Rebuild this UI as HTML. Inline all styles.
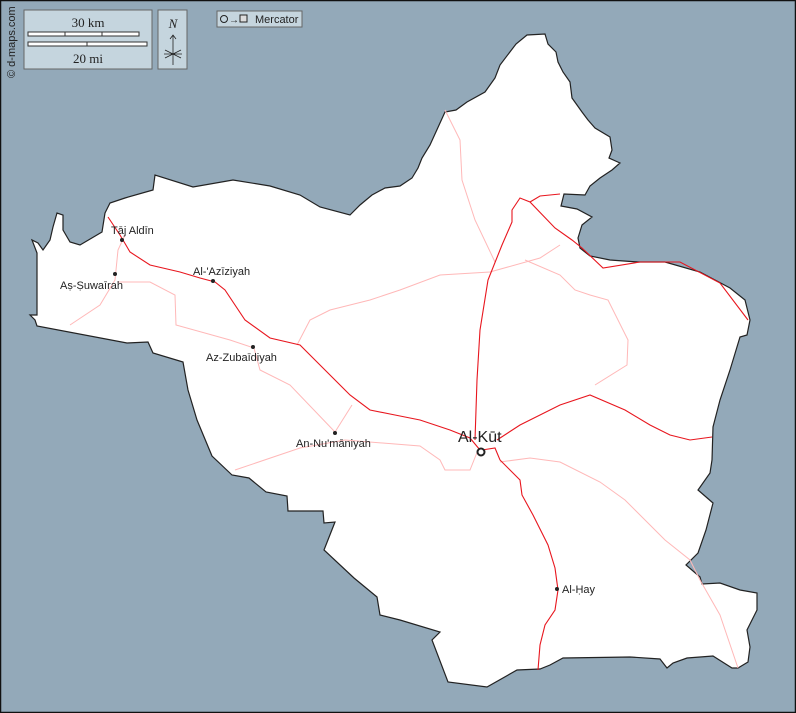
<!DOCTYPE html>
<html><head><meta charset="utf-8"><style>
html,body{margin:0;padding:0}
body{width:796px;height:713px;overflow:hidden;background:#93a9b9;position:relative;font-family:"Liberation Sans",sans-serif}
svg{position:absolute;left:0;top:0}
</style></head><body>
<svg width="796" height="713" viewBox="0 0 796 713">
<rect x="0.5" y="0.5" width="795" height="712" fill="#93a9b9" stroke="#111" stroke-width="1.5"/>
<path fill="#fff" stroke="#222" stroke-width="1.2" d="M30,315 L37,315 L37,253 L32,240 L38,243 L43,250 L50,240 L53,227 L57,213 L63,215 L63,230 L70,242 L80,245 L102,232 L105,213 L110,203 L125,198 L153,190 L155,175 L193,187 L233,180 L270,186 L300,195 L320,207 L350,215 L360,205 L372,195 L385,188 L400,186 L412,178 L418,168 L422,158 L430,145 L445,112 L456,110 L467,102 L485,92 L495,78 L500,65 L516,44 L527,35 L545,34 L548,44 L556,52 L558,62 L563,72 L570,82 L572,98 L582,112 L588,120 L595,128 L610,137 L612,150 L609,158 L620,163 L612,170 L600,178 L590,186 L585,195 L564,194 L561,206 L577,209 L592,217 L582,225 L578,238 L580,248 L590,256 L610,260 L638,262 L665,262 L700,272 L715,280 L730,288 L745,300 L750,320 L747,335 L740,337 L730,370 L720,400 L713,427 L712,460 L710,473 L698,490 L713,503 L706,530 L698,553 L686,565 L700,577 L702,584 L720,583 L740,590 L757,593 L757,610 L747,630 L750,647 L748,662 L738,668 L732,668 L713,656 L687,658 L673,663 L667,668 L660,659 L630,657 L563,658 L550,665 L540,669 L517,670 L487,687 L448,682 L432,640 L440,632 L400,620 L380,615 L377,597 L354,578 L324,550 L335,522 L324,523 L323,511 L288,511 L287,496 L266,492 L249,478 L232,475 L212,456 L197,420 L188,390 L183,362 L153,353 L148,342 L127,343 L37,326 L35,320 Z"/>
<g fill="none" stroke="#ffb8b8" stroke-width="1">
<path d="M70,325 L100,305 L115,280 L118,250 L125,235"/>
<path d="M118,282 L150,282 L175,295 L176,325 L230,340 L254,348 L260,370 L290,385 L335,432"/>
<path d="M235,470 L300,448 L345,440 L420,446 L440,460 L445,470 L470,470 L478,450"/>
<path d="M335,432 L352,405"/>
<path d="M297,345 L310,320 L330,310 L370,300 L400,290 L440,275 L490,272 L540,258 L560,245"/>
<path d="M445,110 L460,140 L462,180 L475,220 L495,262"/>
<path d="M525,260 L560,275 L575,290 L590,295 L608,300 L628,340 L627,365 L595,385"/>
<path d="M500,462 L530,458 L560,462 L600,482 L625,500 L665,540 L690,560 L700,580 L720,615 L738,668"/>
</g>
<g fill="none" stroke="#e8161e" stroke-width="1.1">
<path d="M108,217 L120,235 L130,252 L150,265 L180,272 L200,278 L215,282 L225,290 L245,320 L270,338 L300,345 L315,360 L330,375 L350,395 L370,410 L395,415 L420,420 L450,430 L470,438 L480,450"/>
<path d="M475,440 L477,380 L480,330 L488,280 L502,245 L512,222 L512,210 L520,198 L530,202 L555,228 L572,240 L582,248 L603,268 L640,262 L680,262 L720,283 L748,320"/>
<path d="M530,202 L540,196 L560,194"/>
<path d="M497,440 L520,425 L560,405 L590,395 L625,410 L650,425 L670,435 L690,440 L712,437"/>
<path d="M482,450 L495,448 L500,460 L520,480 L522,495 L533,515 L548,545 L555,568 L558,590 L555,610 L545,625 L540,645 L538,670"/>
</g>
<g fill="#222">
<circle cx="122" cy="240" r="2"/><circle cx="115" cy="274" r="2"/><circle cx="213" cy="281" r="2"/>
<circle cx="253" cy="347" r="2"/><circle cx="335" cy="433" r="2"/><circle cx="557" cy="589" r="2"/>
</g>
<circle cx="481" cy="452" r="3.5" fill="#fff" stroke="#222" stroke-width="2"/>
<g font-size="11" fill="#222" font-family="Liberation Sans,sans-serif">
<text x="111" y="234">Tāj Aldīn</text>
<text x="60" y="289">Aṣ-Ṣuwaīrah</text>
<text x="193" y="275">Al-'Azīziyah</text>
<text x="206" y="361">Az-Zubaīdiyah</text>
<text x="296" y="447">An-Nu'māniyah</text>
<text x="562" y="593">Al-Ḥay</text>
<text x="458" y="442" font-size="16">Al-Kūt</text>
</g>
<rect x="24" y="10" width="128" height="59" fill="#c5d5de" stroke="#666"/>
<text x="88" y="27" font-family="Liberation Serif,serif" font-size="13" text-anchor="middle" fill="#222">30 km</text>
<rect x="28" y="32" width="111" height="4" fill="#fff" stroke="#333"/>
<line x1="65" y1="32" x2="65" y2="36" stroke="#333"/><line x1="102" y1="32" x2="102" y2="36" stroke="#333"/>
<rect x="28" y="42" width="119" height="4" fill="#fff" stroke="#333"/>
<line x1="87" y1="42" x2="87" y2="46" stroke="#333"/>
<text x="88" y="63" font-family="Liberation Serif,serif" font-size="13" text-anchor="middle" fill="#222">20 mi</text>
<rect x="158" y="10" width="29" height="59" fill="#c5d5de" stroke="#666"/>
<text x="173" y="28" font-family="Liberation Serif,serif" font-style="italic" font-size="13" text-anchor="middle" fill="#222">N</text>
<path d="M173,35 L173,65 M170,39 L173,35 L176,39 M165,50 L181,58 M181,50 L165,58 M164,54 L182,54" stroke="#222" fill="none" stroke-width="0.8"/>
<rect x="217" y="11" width="85" height="16" fill="#c5d5de" stroke="#666"/>
<circle cx="224" cy="19" r="3.5" fill="none" stroke="#222"/>
<text x="229" y="23" font-size="10" fill="#222">→</text>
<rect x="240" y="15" width="7" height="7" fill="#ddd" stroke="#222"/>
<text x="255" y="23" font-size="11" fill="#222">Mercator</text>
<text transform="translate(15,78) rotate(-90)" font-size="11" fill="#222">© d-maps.com</text>
</svg>
</body></html>
